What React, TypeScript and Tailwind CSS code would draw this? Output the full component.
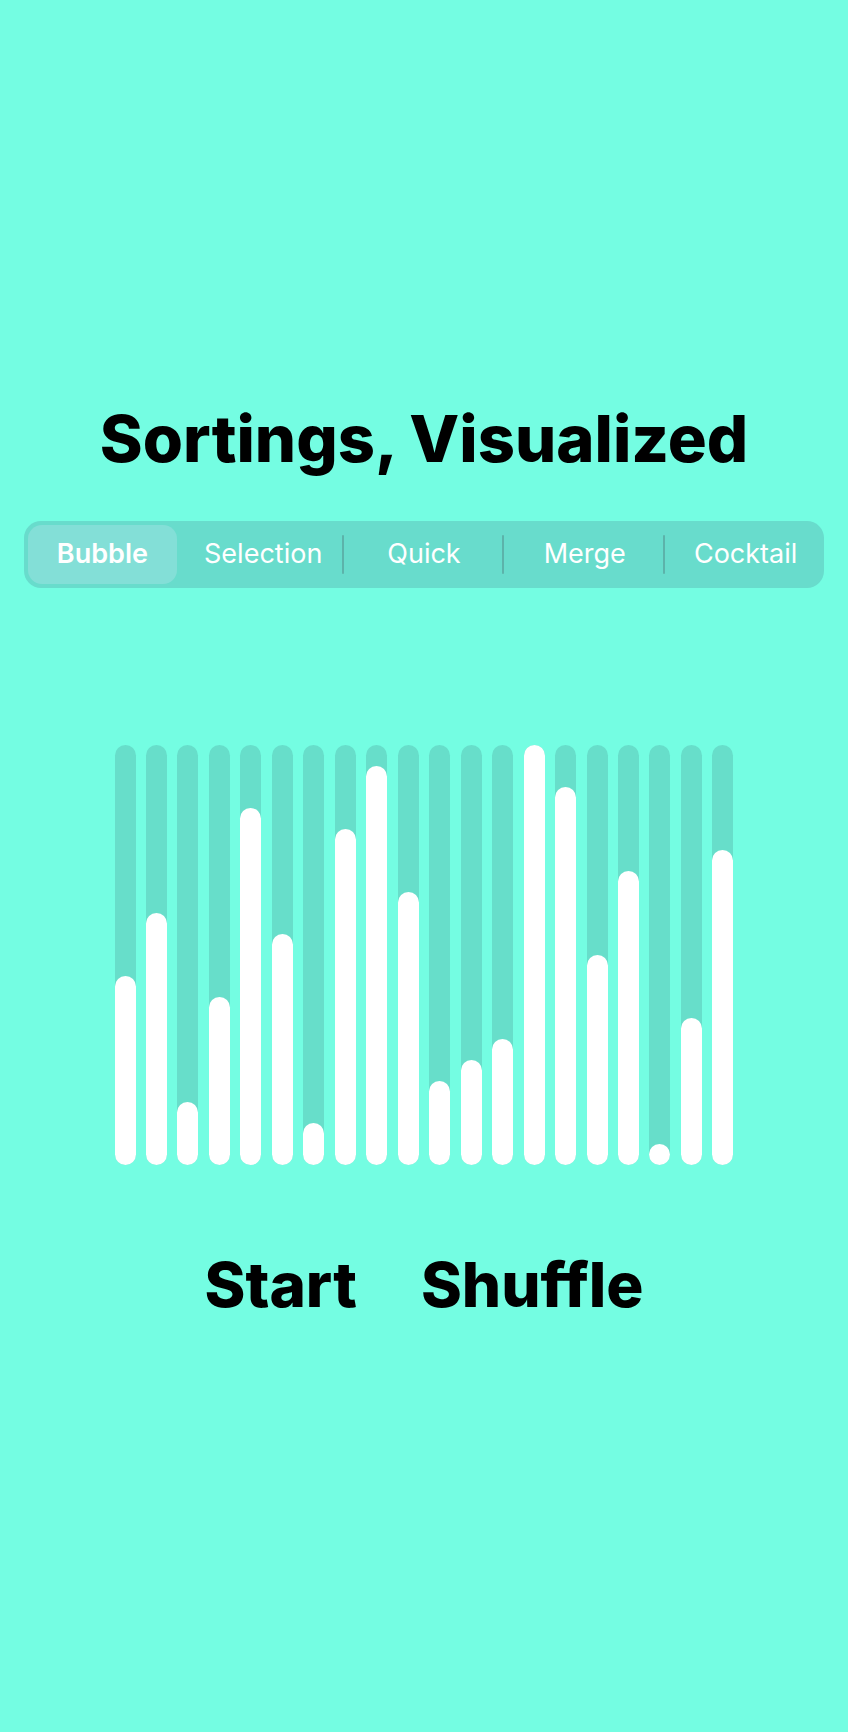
import { useState } from "react";

const algorithms = ["Bubble", "Selection", "Quick", "Merge", "Cocktail"];
const initialValues = [9, 12, 3, 8, 17, 11, 2, 16, 19, 13, 4, 5, 6, 20, 18, 10, 14, 1, 7, 15];

function AlgorithmPicker({ selected, onSelect }: { selected: number; onSelect: (index: number) => void }) {
  return (
    <div
      role="group"
      aria-label="Sorting algorithm"
      className="grid w-full grid-cols-5 gap-x-3 rounded-[17px] bg-[#68dccc] py-1 pr-1 pl-1"
    >
      {algorithms.map((name, index) => {
        const active = index === selected;
        const divided = index > 0 && !active && index - 1 !== selected;
        return (
          <button
            key={name}
            type="button"
            aria-pressed={active}
            onClick={() => onSelect(index)}
            className={`relative flex h-[59px] items-center justify-center rounded-[14px] text-[27px] text-white ${
              active ? "bg-[#83dfd7] font-semibold" : "font-normal"
            }`}
          >
            {divided && <span className="absolute top-2.5 bottom-2.5 -left-2 w-0.5 rounded-full bg-[#5cb3aa]" />}
            {name}
          </button>
        );
      })}
    </div>
  );
}

function Bars({ values }: { values: number[] }) {
  return (
    <div className="flex h-[420px] w-full max-w-[619px] justify-between">
      {values.map((value) => (
        <div key={value} className="flex w-[21px] items-end rounded-full bg-[#67deca]">
          <div className="w-full rounded-full bg-white" style={{ height: `${(value / values.length) * 100}%` }} />
        </div>
      ))}
    </div>
  );
}

export default function App() {
  const [selected, setSelected] = useState(0);
  const [values, setValues] = useState(initialValues);

  const sort = () => setValues([...values].sort((a, b) => a - b));
  const shuffle = () => setValues([...values].sort(() => Math.random() - 0.5));

  return (
    <main className="flex min-h-screen flex-col items-center justify-center bg-[#74fde2] px-6 pb-2 font-['Inter',sans-serif] text-black [font-variant-ligatures:none]">
      <h1 className="mb-[42px] text-center text-[65px] leading-20 font-extrabold">Sortings, Visualized</h1>
      <AlgorithmPicker selected={selected} onSelect={setSelected} />
      <div className="mt-[157px] flex w-full justify-center">
        <Bars values={values} />
      </div>
      <div className="mt-20 flex justify-center gap-16 text-[62px] leading-20 font-extrabold">
        <button type="button" onClick={sort}>
          Start
        </button>
        <button type="button" onClick={shuffle}>
          Shuffle
        </button>
      </div>
    </main>
  );
}
